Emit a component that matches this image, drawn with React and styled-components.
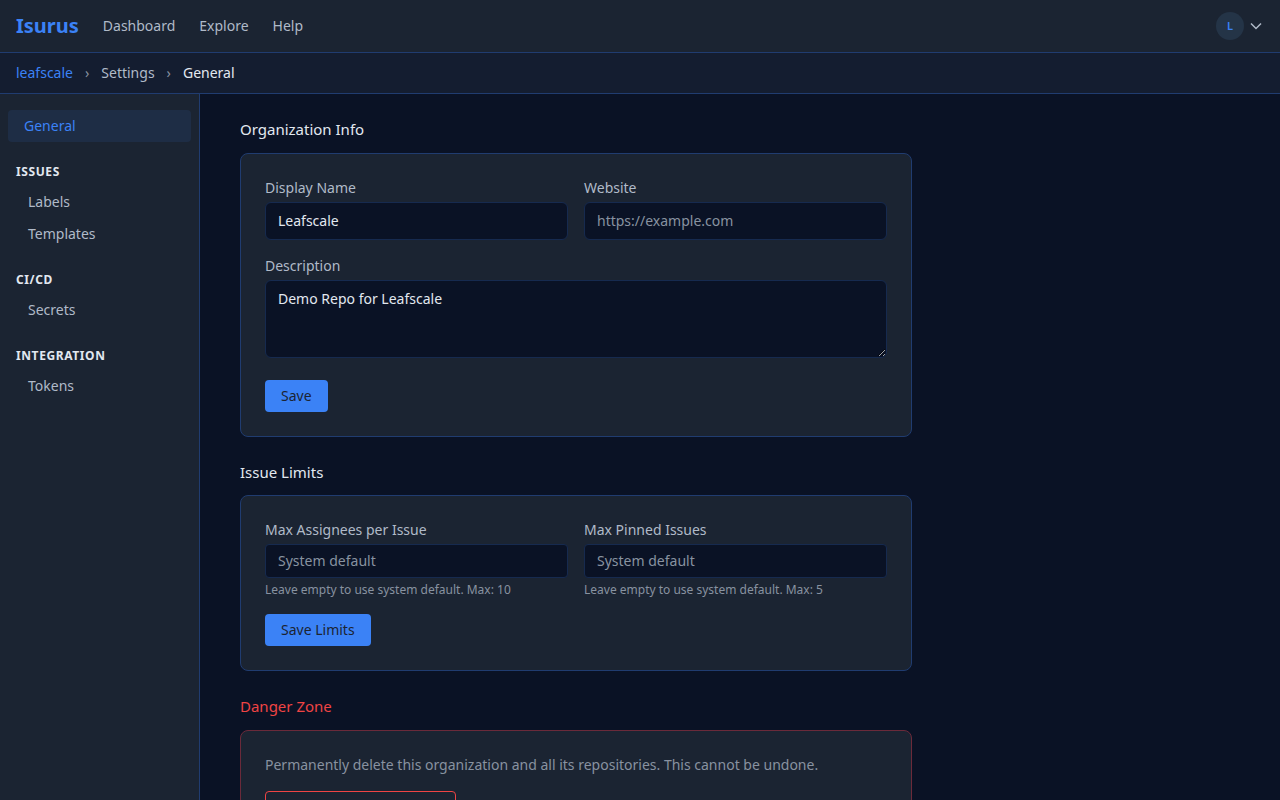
import styled, { createGlobalStyle } from "styled-components";

const GlobalStyle = createGlobalStyle`
  * {
    box-sizing: border-box;
  }
  html,
  body {
    margin: 0;
    height: 100%;
    overflow: hidden;
    background: #0a1225;
    font-family: "Noto Sans", sans-serif;
    line-height: 1.5;
  }
`;

const navLinks = ["Dashboard", "Explore", "Help"];

const sideGroups = [
  { title: "ISSUES", items: ["Labels", "Templates"] },
  { title: "CI/CD", items: ["Secrets"] },
  { title: "INTEGRATION", items: ["Tokens"] },
];

const App = () => {
  return (
    <>
      <GlobalStyle />
      <Page>
        <Header>
          <Logo>Isurus</Logo>
          <Nav>
            {navLinks.map((link) => (
              <NavLink key={link}>{link}</NavLink>
            ))}
          </Nav>
          <UserMenu>
            <Avatar>L</Avatar>
            <svg width="12" height="12" viewBox="0 0 12 12" fill="none">
              <path d="M1 3.5 L6 8.5 L11 3.5" stroke="#b0bac8" strokeWidth="1.5" />
            </svg>
          </UserMenu>
        </Header>
        <Breadcrumb>
          <CrumbLink>leafscale</CrumbLink>
          <Sep>›</Sep>
          <Crumb>Settings</Crumb>
          <Sep>›</Sep>
          <CrumbCurrent>General</CrumbCurrent>
        </Breadcrumb>
        <Body>
          <Sidebar>
            <ActiveItem>General</ActiveItem>
            {sideGroups.map((group) => (
              <SideGroup key={group.title}>
                <SideTitle>{group.title}</SideTitle>
                {group.items.map((item) => (
                  <SideItem key={item}>{item}</SideItem>
                ))}
              </SideGroup>
            ))}
          </Sidebar>
          <Main>
            <Section>
              <SectionTitle>Organization Info</SectionTitle>
              <Card>
                <Row>
                  <Field>
                    <Label>Display Name</Label>
                    <Input defaultValue="Leafscale" />
                  </Field>
                  <Field>
                    <Label>Website</Label>
                    <Input placeholder="https://example.com" />
                  </Field>
                </Row>
                <Field>
                  <Label>Description</Label>
                  <TextArea defaultValue="Demo Repo for Leafscale" />
                </Field>
                <PrimaryButton>Save</PrimaryButton>
              </Card>
            </Section>
            <Section>
              <SectionTitle>Issue Limits</SectionTitle>
              <Card>
                <Row>
                  <Field>
                    <Label>Max Assignees per Issue</Label>
                    <NumberInput placeholder="System default" />
                    <Hint>Leave empty to use system default. Max: 10</Hint>
                  </Field>
                  <Field>
                    <Label>Max Pinned Issues</Label>
                    <NumberInput placeholder="System default" />
                    <Hint>Leave empty to use system default. Max: 5</Hint>
                  </Field>
                </Row>
                <PrimaryButton>Save Limits</PrimaryButton>
              </Card>
            </Section>
            <Section>
              <DangerTitle>Danger Zone</DangerTitle>
              <DangerCard>
                <DangerText>
                  Permanently delete this organization and all its repositories. This cannot be undone.
                </DangerText>
                <DangerButton>Delete this organization</DangerButton>
              </DangerCard>
            </Section>
          </Main>
        </Body>
      </Page>
    </>
  );
};

const Page = styled.div`
  height: 100vh;
  display: flex;
  flex-direction: column;
  overflow: hidden;
`;

const Header = styled.header`
  height: 53px;
  flex-shrink: 0;
  display: flex;
  align-items: center;
  padding: 0 16px;
  background: #1b2432;
  border-bottom: 1px solid #203c70;
`;

const Logo = styled.div`
  font-size: 20px;
  font-weight: 700;
  color: #3b82f6;
  margin-right: 24px;
`;

const Nav = styled.nav`
  display: flex;
  gap: 24px;
  margin-bottom: 1px;
`;

const NavLink = styled.a`
  font-size: 14px;
  color: #b0bac8;
`;

const UserMenu = styled.div`
  margin-left: auto;
  display: flex;
  align-items: center;
  gap: 6px;
  padding-right: 2px;
`;

const Avatar = styled.div`
  width: 28px;
  height: 28px;
  border-radius: 50%;
  background: #243447;
  color: #3b82f6;
  font-size: 11px;
  font-weight: 600;
  display: flex;
  align-items: center;
  justify-content: center;
`;

const Breadcrumb = styled.div`
  height: 41px;
  flex-shrink: 0;
  display: flex;
  align-items: center;
  gap: 8px;
  padding: 0 16px 1px;
  font-size: 14px;
  background: #141d30;
  border-bottom: 1px solid #203c70;
`;

const CrumbLink = styled.a`
  color: #3b82f6;
`;

const Sep = styled.span`
  color: #8892a0;
  margin: 0 4px;
`;

const Crumb = styled.span`
  color: #b0bac8;
`;

const CrumbCurrent = styled.span`
  color: #e2e8f0;
`;

const Body = styled.div`
  flex: 1;
  min-height: 0;
  display: flex;
`;

const Sidebar = styled.aside`
  width: 200px;
  flex-shrink: 0;
  padding: 16px 8px;
  background: #1b2432;
  border-right: 1px solid #203c70;
`;

const ActiveItem = styled.div`
  height: 32px;
  padding: 0 16px 1px;
  display: flex;
  align-items: center;
  font-size: 14px;
  color: #3b82f6;
  background: #1e2d45;
  border-radius: 4px;
`;

const SideGroup = styled.div`
  margin-top: 16px;
`;

const SideTitle = styled.div`
  height: 28px;
  padding: 0 8px;
  display: flex;
  align-items: center;
  font-size: 12px;
  font-weight: 700;
  letter-spacing: 0.6px;
  color: #e2e8f0;
`;

const SideItem = styled.div`
  height: 32px;
  padding: 0 20px 1px;
  display: flex;
  align-items: center;
  font-size: 14px;
  color: #b0bac8;
`;

const Main = styled.main`
  flex: 1;
  min-width: 0;
  padding: 24px 40px;
  overflow: hidden;
`;

const Section = styled.section`
  width: 672px;
  margin-bottom: 24px;
`;

const SectionTitle = styled.h2`
  margin: 0 0 12px;
  font-size: 15px;
  line-height: 1.5;
  font-weight: 400;
  color: #e2e8f0;
`;

const DangerTitle = styled(SectionTitle)`
  margin-bottom: 12.5px;
  color: #ef4444;
`;

const Card = styled.div`
  display: flex;
  flex-direction: column;
  align-items: flex-start;
  gap: 16px;
  padding: 24px;
  background: #1b2432;
  border: 1px solid #203c70;
  border-radius: 8px;
`;

const DangerCard = styled(Card)`
  border-color: #6b2a3a;
`;

const Row = styled.div`
  width: 100%;
  display: grid;
  grid-template-columns: 1fr 1fr;
  gap: 16px;
`;

const Field = styled.div`
  width: 100%;
`;

const Label = styled.label`
  display: block;
  font-size: 14px;
  line-height: 20px;
  color: #b0bac8;
  margin-bottom: 4px;
`;

const Input = styled.input`
  display: block;
  width: 100%;
  height: 38px;
  padding: 0 12px;
  font: 14px "Noto Sans", sans-serif;
  color: #e2e8f0;
  background: #0a1225;
  border: 1px solid #162a4f;
  border-radius: 6px;
  outline: none;
  &::placeholder {
    color: #8892a0;
    opacity: 1;
  }
`;

const NumberInput = styled(Input)`
  height: 33.6px;
  padding-bottom: 1px;
  border-radius: 4px;
`;

const TextArea = styled.textarea`
  width: 100%;
  height: 78px;
  padding: 8px 12px;
  font: 14px/20px "Noto Sans", sans-serif;
  color: #e2e8f0;
  background: #0a1225;
  border: 1px solid #162a4f;
  border-radius: 6px;
  outline: none;
`;

const Hint = styled.div`
  margin-top: 4px;
  font-size: 12px;
  line-height: 16px;
  color: #8892a0;
`;

const PrimaryButton = styled.button`
  height: 32px;
  padding: 0 16px;
  font: 14px "Noto Sans", sans-serif;
  color: #1b2432;
  background: #3b82f6;
  border: none;
  border-radius: 4px;
`;

const DangerText = styled.p`
  margin: 0;
  font-size: 14px;
  line-height: 20px;
  color: #8892a0;
`;

const DangerButton = styled.button`
  height: 32px;
  padding: 0 16px;
  font: 14px "Noto Sans", sans-serif;
  color: #ef4444;
  background: transparent;
  border: 1px solid #ef4444;
  border-radius: 4px;
`;

export default App;
